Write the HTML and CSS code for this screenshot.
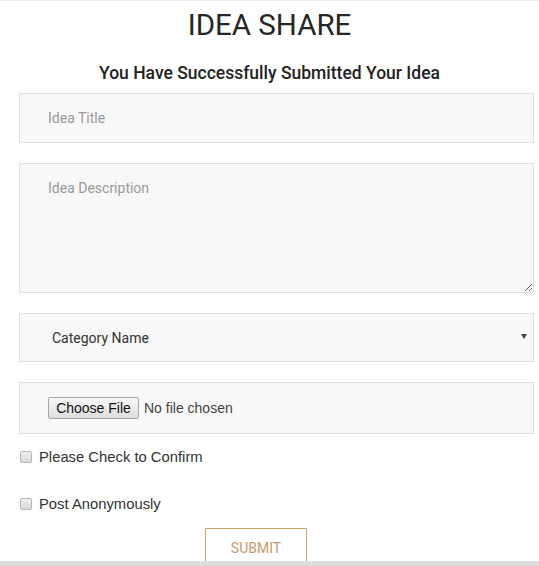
FILE: index.html
```html
<!DOCTYPE html>
<html lang="en">
<head>
<meta charset="utf-8">
<title>Idea Share</title>
<link rel="stylesheet" href="styles.css">
</head>
<body>
  <h1 class="title">IDEA SHARE</h1>
  <h2 class="subtitle">You Have Successfully Submitted Your Idea</h2>
  <form class="idea-form">
    <input class="field field-input" type="text" placeholder="Idea Title">
    <textarea class="field field-textarea" placeholder="Idea Description"></textarea>
    <div class="select-wrap">
      <select class="field field-select">
        <option>Category Name</option>
      </select>
    </div>
    <div class="field file-box">
      <input class="file-input" type="file">
    </div>
    <label class="check-row check-first"><input class="check" type="checkbox"><span>Please Check to Confirm</span></label>
    <label class="check-row check-second"><input class="check" type="checkbox"><span>Post Anonymously</span></label>
    <button class="submit-btn" type="button">SUBMIT</button>
  </form>
  <div class="bottom-bar"></div>
</body>
</html>
```

FILE: styles.css
```css
* { box-sizing: border-box; }
html, body { margin: 0; padding: 0; background: #fff; }
body {
  border-top: 1px solid #ececec;
  font-family: Roboto, "Liberation Sans", Arial, sans-serif;
  height: 566px;
  overflow: hidden;
}
.title {
  margin: 6px 0 0;
  font-size: 29.5px;
  line-height: 36px;
  font-weight: 400;
  color: #262626;
  text-align: center;
}
.subtitle {
  margin: 18px 0 0;
  font-size: 17.5px;
  line-height: 24px;
  font-weight: 500;
  color: #222;
  text-align: center;
}
.idea-form {
  margin: 8px 5px 0 19px;
  display: flex;
  flex-direction: column;
  align-items: stretch;
}
.field {
  display: block;
  width: 100%;
  border: 1px solid #e0e0e0;
  background: #f8f8f8;
  font-family: Roboto, "Liberation Sans", Arial, sans-serif;
  font-size: 14px;
  color: #555;
  outline: none;
  border-radius: 0;
}
.field::placeholder { color: #9a9a9a; }
.field-input {
  height: 50px;
  padding: 0 28px;
  margin: 0 0 20px;
}
.field-textarea {
  height: 130px;
  padding: 16px 28px;
  margin: 0 0 20px;
  resize: vertical;
}
.select-wrap {
  position: relative;
  margin: 0 0 20px;
}
.select-wrap::after {
  content: "";
  position: absolute;
  right: 7px;
  top: 21px;
  border-left: 3px solid transparent;
  border-right: 3px solid transparent;
  border-top: 5px solid #444;
  pointer-events: none;
}
.field-select {
  height: 49px;
  padding: 0 28px 0 32px;
  appearance: none;
  -webkit-appearance: none;
  color: #333;
}
.file-box {
  height: 52px;
  padding: 14px 28px;
}
.file-input {
  font-family: "Liberation Sans", Arial, sans-serif;
  font-size: 14px;
  color: #444;
}
.file-input::file-selector-button {
  font-family: "Liberation Sans", Arial, sans-serif;
  font-size: 14px;
  color: #111;
  height: 22px;
  width: 91px;
  padding: 0;
  margin-right: 5px;
  border: 1px solid #a6a6a6;
  border-radius: 2px;
  background: linear-gradient(#f8f8f8, #dddddd);
}
.check-row {
  display: flex;
  align-items: center;
  height: 20px;
  font-family: "Liberation Sans", Arial, sans-serif;
  font-size: 14.8px;
  color: #333;
}
.check-first { margin-top: 13px; }
.check-second { margin-top: 27px; }
.check {
  appearance: none;
  -webkit-appearance: none;
  width: 12px;
  height: 12px;
  margin: 0 7px 0 1px;
  border: 1px solid #b5b5b5;
  border-radius: 2px;
  background: linear-gradient(#f0f0f0, #d8d8d8);
}
.submit-btn {
  align-self: flex-start;
  margin: 14px 0 0 186px;
  width: 102px;
  height: 40px;
  border: 1px solid #d2a46e;
  background: #fff;
  color: #c99a6d;
  font-family: Roboto, "Liberation Sans", Arial, sans-serif;
  font-size: 14px;
  padding: 0;
}
.bottom-bar {
  position: fixed;
  left: 0;
  right: 0;
  bottom: 0;
  height: 5px;
  background: #dcdcdc;
}
```
